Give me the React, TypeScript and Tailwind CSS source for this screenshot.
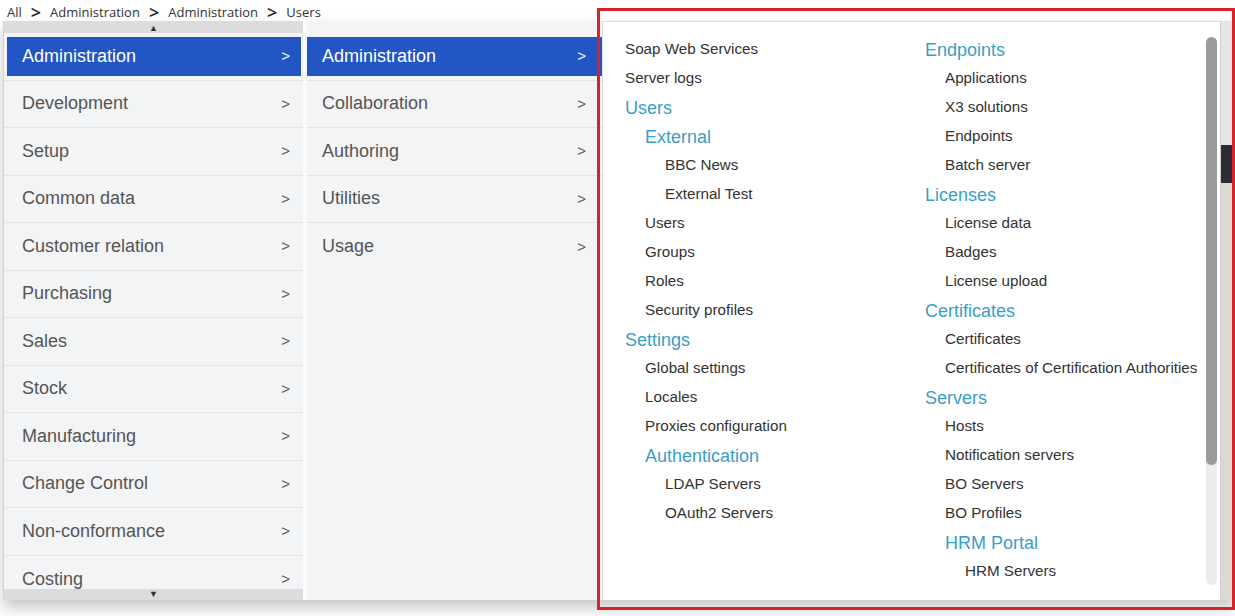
import React from 'react';

type Entry = { label: string; level: 0 | 1 | 2; heading?: boolean };

const mainMenu = [
  'Administration',
  'Development',
  'Setup',
  'Common data',
  'Customer relation',
  'Purchasing',
  'Sales',
  'Stock',
  'Manufacturing',
  'Change Control',
  'Non-conformance',
  'Costing',
];

const subMenu = ['Administration', 'Collaboration', 'Authoring', 'Utilities', 'Usage'];

const leftColumn: Entry[] = [
  { label: 'Soap Web Services', level: 0 },
  { label: 'Server logs', level: 0 },
  { label: 'Users', level: 0, heading: true },
  { label: 'External', level: 1, heading: true },
  { label: 'BBC News', level: 2 },
  { label: 'External Test', level: 2 },
  { label: 'Users', level: 1 },
  { label: 'Groups', level: 1 },
  { label: 'Roles', level: 1 },
  { label: 'Security profiles', level: 1 },
  { label: 'Settings', level: 0, heading: true },
  { label: 'Global settings', level: 1 },
  { label: 'Locales', level: 1 },
  { label: 'Proxies configuration', level: 1 },
  { label: 'Authentication', level: 1, heading: true },
  { label: 'LDAP Servers', level: 2 },
  { label: 'OAuth2 Servers', level: 2 },
];

const rightColumn: Entry[] = [
  { label: 'Endpoints', level: 0, heading: true },
  { label: 'Applications', level: 1 },
  { label: 'X3 solutions', level: 1 },
  { label: 'Endpoints', level: 1 },
  { label: 'Batch server', level: 1 },
  { label: 'Licenses', level: 0, heading: true },
  { label: 'License data', level: 1 },
  { label: 'Badges', level: 1 },
  { label: 'License upload', level: 1 },
  { label: 'Certificates', level: 0, heading: true },
  { label: 'Certificates', level: 1 },
  { label: 'Certificates of Certification Authorities', level: 1 },
  { label: 'Servers', level: 0, heading: true },
  { label: 'Hosts', level: 1 },
  { label: 'Notification servers', level: 1 },
  { label: 'BO Servers', level: 1 },
  { label: 'BO Profiles', level: 1 },
  { label: 'HRM Portal', level: 1, heading: true },
  { label: 'HRM Servers', level: 2 },
];

function MenuRow({
  label,
  selected,
  last,
  inner,
}: {
  label: string;
  selected?: boolean;
  last?: boolean;
  inner?: boolean;
}) {
  return (
    <div
      className={`h-[47.5px] shrink-0 flex items-stretch ${last ? '' : 'border-b border-[#e2e3e5]'}`}
    >
      {selected ? (
        <div
          className={`my-[4px] flex-1 flex items-center justify-between bg-[#2256c5] text-white ${
            inner ? 'ml-0 mr-0 pl-[15px] pr-[16px]' : 'ml-[3px] mr-[2px] pl-[15px] pr-[11px]'
          }`}
        >
          <span className="text-[18px]">{label}</span>
          <span className="text-[15px]">&gt;</span>
        </div>
      ) : (
        <div
          className={`flex-1 flex items-center justify-between text-[#555] ${
            inner ? 'pl-[15px] pr-[16px]' : 'pl-[18px] pr-[13px]'
          }`}
        >
          <span className="text-[18px]">{label}</span>
          <span className="text-[15px]">&gt;</span>
        </div>
      )}
    </div>
  );
}

function PanelItem({ entry }: { entry: Entry }) {
  const indent = entry.level === 0 ? 'pl-0' : entry.level === 1 ? 'pl-[20px]' : 'pl-[40px]';
  return (
    <div className={`h-[29px] shrink-0 flex items-center whitespace-nowrap ${indent}`}>
      {entry.heading ? (
        <span className="text-[18px] text-[#3a9ec8] pt-[2px]">{entry.label}</span>
      ) : (
        <span className="text-[15.2px] text-[#333]">{entry.label}</span>
      )}
    </div>
  );
}

export default function App() {
  return (
    <div
      className="relative w-[1235px] h-[616px] overflow-hidden bg-white"
      style={{ fontFamily: '"Liberation Sans", Arial, sans-serif' }}
    >
      <div
        className="h-[21px] flex items-center pl-[7px] pt-[3px] gap-[9px] text-[13px] leading-[16px] text-[#333]"
        style={{ fontFamily: '"Open Sans", "Noto Sans", sans-serif' }}
      >
        <span>All</span>
        <span className="text-[18px] font-semibold text-[#222] leading-none">&gt;</span>
        <span>Administration</span>
        <span className="text-[18px] font-semibold text-[#222] leading-none">&gt;</span>
        <span>Administration</span>
        <span className="text-[18px] font-semibold text-[#222] leading-none">&gt;</span>
        <span>Users</span>
      </div>

      <div className="flex h-[579px] ml-[3px] shadow-[0_8px_14px_rgba(0,0,0,0.22)]">
        <div className="w-[300px] flex flex-col bg-[#f3f4f6] border-l border-[#d4d4d4]">
          <div className="h-[12px] shrink-0 bg-[#dcdcdc] flex items-center justify-center pt-[2px] text-[9px] text-[#333] leading-none">
            ▲
          </div>
          <div className="flex-1 overflow-hidden flex flex-col">
            {mainMenu.map((item, i) => (
              <MenuRow key={item} label={item} selected={i === 0} last={i === mainMenu.length - 1} />
            ))}
          </div>
          <div className="h-[11px] shrink-0 bg-[#dcdcdc] flex items-center justify-center text-[9px] text-[#333] leading-none">
            ▼
          </div>
        </div>

        <div className="w-[4px] bg-[#fafafa]" />

        <div className="w-[295px] flex flex-col bg-[#f3f4f6] pt-[12px]">
          {subMenu.map((item, i) => (
            <MenuRow
              key={item}
              label={item}
              inner
              selected={i === 0}
              last={i === subMenu.length - 1}
            />
          ))}
        </div>

        <div className="w-[618px] flex bg-white border-t border-l border-[#dcdcdc]">
          <div className="flex-1 flex pl-[22px] pt-[13px]">
            <div className="w-[300px] flex flex-col">
              {leftColumn.map((e, i) => (
                <PanelItem key={i} entry={e} />
              ))}
            </div>
            <div className="flex flex-col">
              {rightColumn.map((e, i) => (
                <PanelItem key={i} entry={e} />
              ))}
            </div>
          </div>
          <div className="w-[11px] mr-[3px] mt-[15px] mb-[15px] rounded-full bg-[#ececec] flex flex-col">
            <div className="h-[428px] rounded-full bg-[#9b9b9b]" />
          </div>
        </div>

        <div className="flex-1 flex flex-col bg-[#eeeeee] border-l border-[#cfcfcf]">
          <div className="h-[124px] bg-[#e6e6e6]" />
          <div className="h-[38px] bg-[#2a2d36]" />
          <div className="flex-1 bg-[#dcd8d2]" />
        </div>
      </div>

      <div className="absolute left-[597px] top-[8px] w-[638px] h-[602px] border-[3px] border-[#d9212b] pointer-events-none" />
    </div>
  );
}
